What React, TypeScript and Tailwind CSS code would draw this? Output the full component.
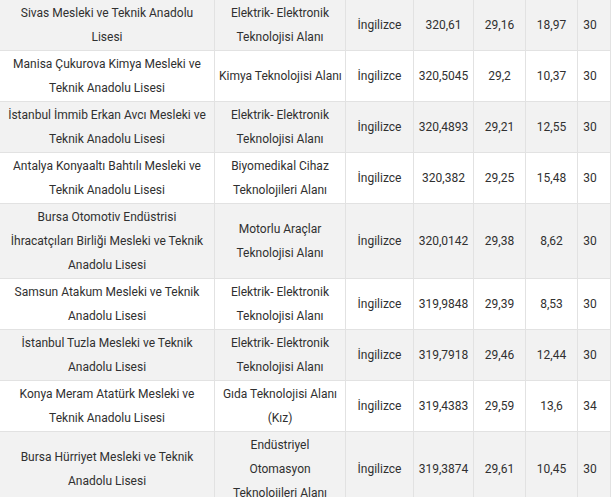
import React from "react"

type Row = {
  okul: string[]
  alan: string[]
  dil: string
  puan: string
  a: string
  b: string
  c: string
}

const rows: Row[] = [
  { okul: ["Sivas Mesleki ve Teknik Anadolu", "Lisesi"], alan: ["Elektrik- Elektronik", "Teknolojisi Alanı"], dil: "İngilizce", puan: "320,61", a: "29,16", b: "18,97", c: "30" },
  { okul: ["Manisa Çukurova Kimya Mesleki ve", "Teknik Anadolu Lisesi"], alan: ["Kimya Teknolojisi Alanı"], dil: "İngilizce", puan: "320,5045", a: "29,2", b: "10,37", c: "30" },
  { okul: ["İstanbul İmmib Erkan Avcı Mesleki ve", "Teknik Anadolu Lisesi"], alan: ["Elektrik- Elektronik", "Teknolojisi Alanı"], dil: "İngilizce", puan: "320,4893", a: "29,21", b: "12,55", c: "30" },
  { okul: ["Antalya Konyaaltı Bahtılı Mesleki ve", "Teknik Anadolu Lisesi"], alan: ["Biyomedikal Cihaz", "Teknolojileri Alanı"], dil: "İngilizce", puan: "320,382", a: "29,25", b: "15,48", c: "30" },
  { okul: ["Bursa Otomotiv Endüstrisi", "İhracatçıları Birliği Mesleki ve Teknik", "Anadolu Lisesi"], alan: ["Motorlu Araçlar", "Teknolojisi Alanı"], dil: "İngilizce", puan: "320,0142", a: "29,38", b: "8,62", c: "30" },
  { okul: ["Samsun Atakum Mesleki ve Teknik", "Anadolu Lisesi"], alan: ["Elektrik- Elektronik", "Teknolojisi Alanı"], dil: "İngilizce", puan: "319,9848", a: "29,39", b: "8,53", c: "30" },
  { okul: ["İstanbul Tuzla Mesleki ve Teknik", "Anadolu Lisesi"], alan: ["Elektrik- Elektronik", "Teknolojisi Alanı"], dil: "İngilizce", puan: "319,7918", a: "29,46", b: "12,44", c: "30" },
  { okul: ["Konya Meram Atatürk Mesleki ve", "Teknik Anadolu Lisesi"], alan: ["Gıda Teknolojisi Alanı", "(Kız)"], dil: "İngilizce", puan: "319,4383", a: "29,59", b: "13,6", c: "34" },
  { okul: ["Bursa Hürriyet Mesleki ve Teknik", "Anadolu Lisesi"], alan: ["Endüstriyel", "Otomasyon", "Teknolojileri Alanı"], dil: "İngilizce", puan: "319,3874", a: "29,61", b: "10,45", c: "30" },
]

const td = "border border-[#e2e2e2] px-1 py-px text-center align-middle"

export default function App() {
  return (
    <div className="w-[614px] h-[497px] overflow-hidden bg-white">
      <table
        className="table-fixed border-collapse w-[611px] -mt-px -ml-px text-[12px] leading-[24px] text-[#303030]"
        style={{ fontFamily: "Roboto, 'Noto Sans', sans-serif" }}
      >
        <colgroup>
          <col className="w-[215px]" />
          <col className="w-[131px]" />
          <col className="w-[68px]" />
          <col className="w-[60px]" />
          <col className="w-[52px]" />
          <col className="w-[52px]" />
          <col className="w-[33px]" />
        </colgroup>
        <tbody>
          {rows.map((r, i) => (
            <tr key={i} className={i % 2 === 0 ? "bg-[#f2f2f2]" : "bg-white"}>
              <td className={td}>
                {r.okul.map((l, j) => (
                  <div key={j} className="whitespace-nowrap">{l}</div>
                ))}
              </td>
              <td className={td}>
                {r.alan.map((l, j) => (
                  <div key={j} className="whitespace-nowrap">{l}</div>
                ))}
              </td>
              <td className={td}>{r.dil}</td>
              <td className={td}>{r.puan}</td>
              <td className={td}>{r.a}</td>
              <td className={td}>{r.b}</td>
              <td className={td + " pr-[12px]"}>{r.c}</td>
            </tr>
          ))}
        </tbody>
      </table>
    </div>
  )
}
